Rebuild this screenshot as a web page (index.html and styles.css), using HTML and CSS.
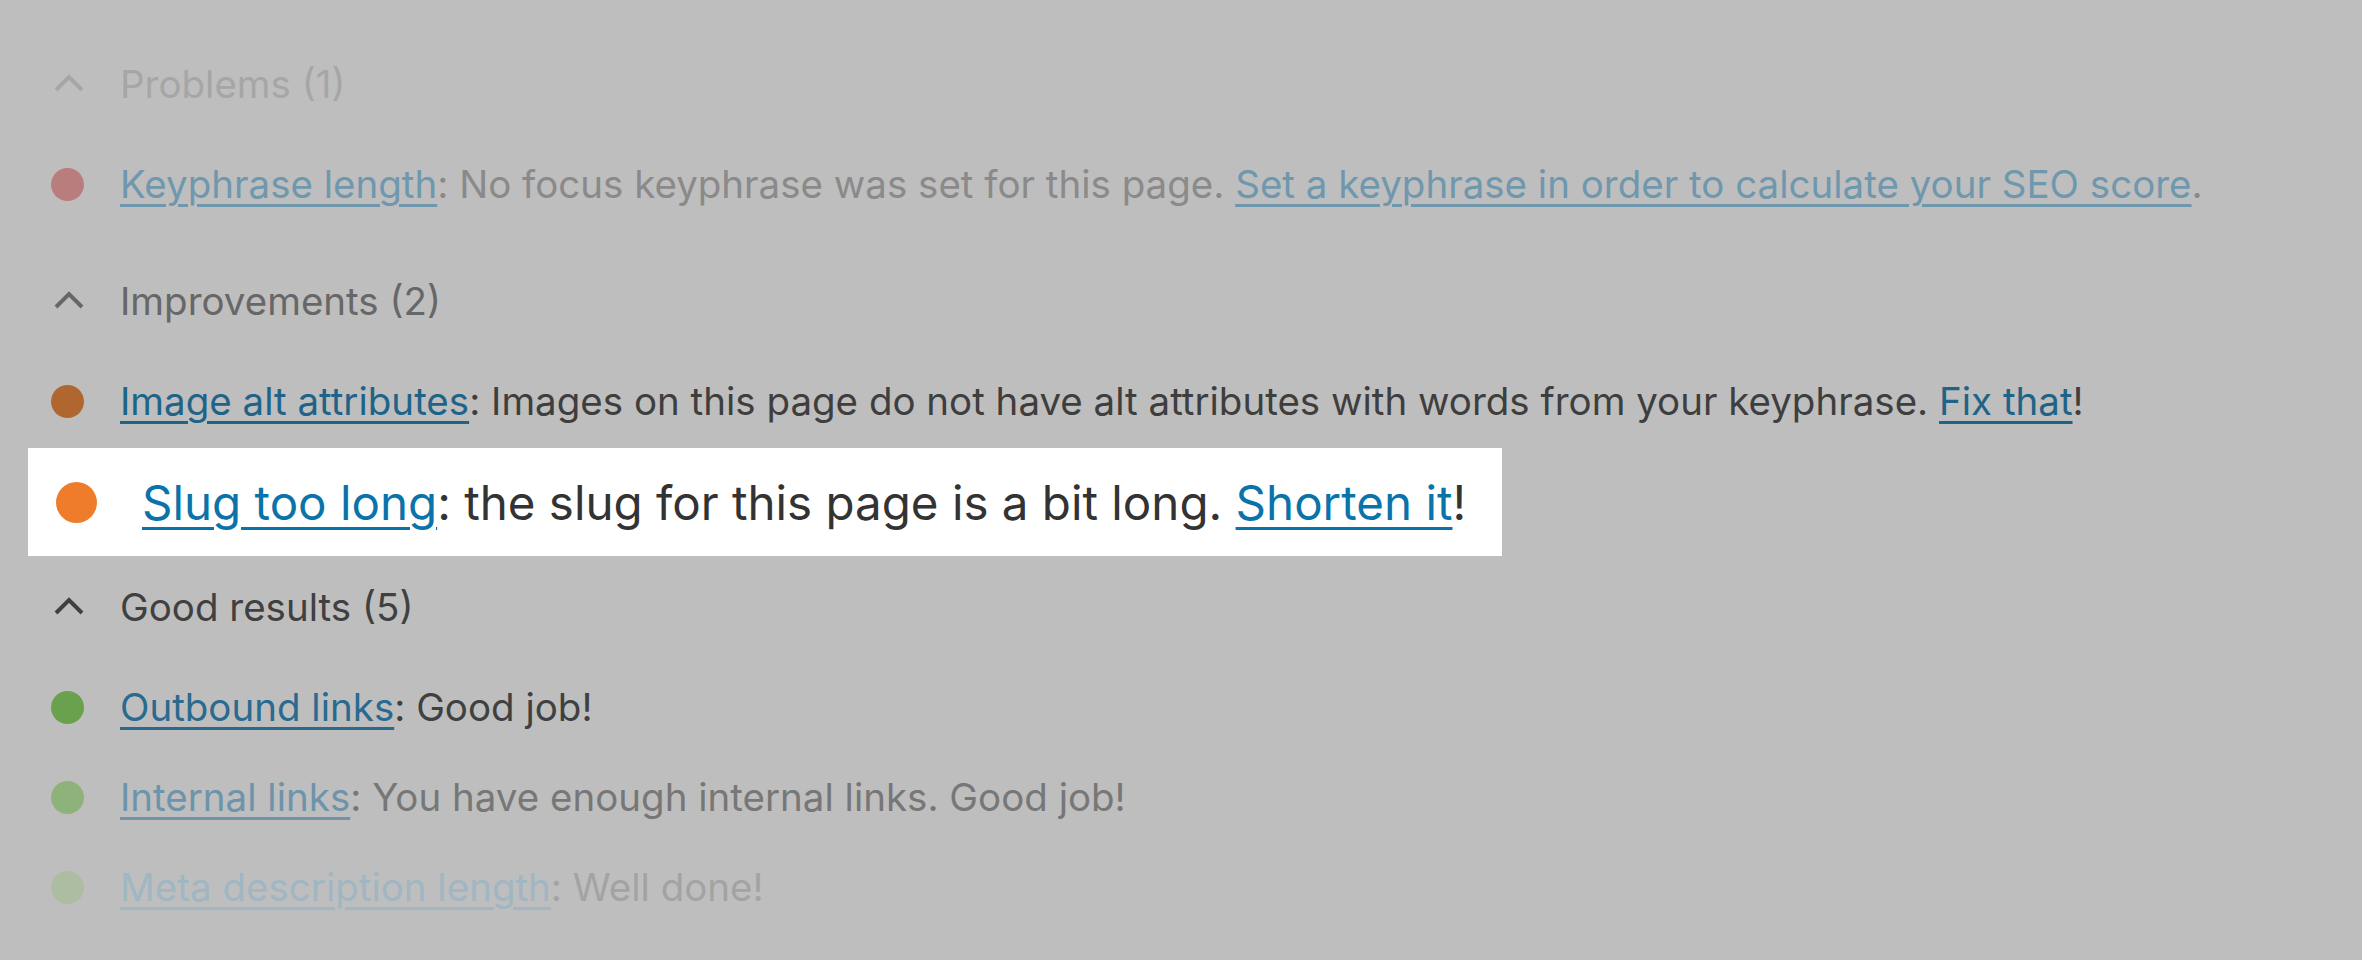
FILE: index.html
```html
<!DOCTYPE html>
<html lang="en">
<head>
<meta charset="utf-8">
<title>SEO analysis</title>
<link rel="stylesheet" href="styles.css">
</head>
<body>
<main class="results">
  <section class="group">
    <h2 class="group-head fade-3">
      <svg class="chev" viewBox="0 0 30 18"><polyline points="2,16 15,3 28,16"/></svg>
      <span>Problems (1)</span>
    </h2>
    <ul class="items">
      <li class="item fade-2 red"><span class="dot"></span><p><a href="#">Keyphrase length</a>: No focus keyphrase was set for this page. <a href="#">Set a keyphrase in order to calculate your SEO score</a>.</p></li>
    </ul>
  </section>

  <section class="group">
    <h2 class="group-head fade-1">
      <svg class="chev" viewBox="0 0 30 18"><polyline points="2,16 15,3 28,16"/></svg>
      <span>Improvements (2)</span>
    </h2>
    <ul class="items">
      <li class="item brown"><span class="dot"></span><p><a href="#">Image alt attributes</a>: Images on this page do not have alt attributes with words from your keyphrase. <a href="#">Fix that</a>!</p></li>
      <li class="item highlight"><span class="dot"></span><p><a href="#">Slug too long</a>: the slug for this page is a bit long. <a href="#">Shorten it</a>!</p></li>
    </ul>
  </section>

  <section class="group tight">
    <h2 class="group-head">
      <svg class="chev" viewBox="0 0 30 18"><polyline points="2,16 15,3 28,16"/></svg>
      <span>Good results (5)</span>
    </h2>
    <ul class="items">
      <li class="item green"><span class="dot"></span><p><a href="#">Outbound links</a>: Good job!</p></li>
      <li class="item green-2"><span class="dot"></span><p><a href="#">Internal links</a>: You have enough internal links. Good job!</p></li>
      <li class="item green-3"><span class="dot"></span><p><a href="#">Meta description length</a>: Well done!</p></li>
    </ul>
  </section>
</main>
</body>
</html>
```
FILE: styles.css
```css
* { box-sizing: border-box; }

html, body {
  margin: 0;
  padding: 0;
  background: #bebebe;
}

body {
  font-family: Inter, "Noto Sans", "Liberation Sans", sans-serif;
  font-size: 38.5px;
  color: #3e3e3e;
  --text: #3e3e3e;
  --link: #1f6488;
  --dot: #b0672f;
  --head: #404040;
}

.results {
  padding: 39px 0 0 0;
  display: flex;
  flex-direction: column;
}

.group + .group { margin-top: 27px; }
.group.tight { margin-top: 6px; }

.group-head {
  margin: 0 0 10px 0;
  height: 90px;
  display: flex;
  align-items: center;
  gap: 36px;
  padding-left: 54px;
  font-size: 38.5px;
  font-weight: 400;
  color: var(--head);
}

.chev {
  width: 30px;
  height: 18px;
  flex: none;
  margin-top: -2px;
}
.chev polyline {
  fill: none;
  stroke: var(--head);
  stroke-width: 4;
  stroke-linecap: butt;
  stroke-linejoin: miter;
}

.items {
  list-style: none;
  margin: 0;
  padding: 0;
}

.item {
  height: 90px;
  display: flex;
  align-items: center;
  gap: 36px;
  padding-left: 51px;
  color: var(--text);
}

.item p { margin: 0; white-space: nowrap; }

.item a {
  color: var(--link);
  text-decoration: underline;
  text-decoration-thickness: 2.5px;
  text-underline-offset: 6px;
}

.dot {
  width: 33px;
  height: 33px;
  border-radius: 50%;
  background: var(--dot);
  flex: none;
}

/* row tones (dimmed page) */
.fade-3 { --head: #a6a6a6; }
.fade-1 { --head: #676767; }

.red   { --dot: #ba7d7d; --link: #6f98ae; --text: #8a8a8a; }
.brown { --dot: #b0672f; --link: #1f6488; --text: #3e3e3e; }
.green { --dot: #6aa14d; --link: #2a6a8f; --text: #404040; }
.green-2 { --dot: #8db37a; --link: #6d94aa; --text: #777777; }
.green-3 { --dot: #acbda1; --link: #a0b6c3; --text: #a3a3a3; }

/* highlighted row */
.highlight {
  margin: 2px 0 0 28px;
  width: 1474px;
  height: 108px;
  padding-left: 28px;
  gap: 45px;
  background: #ffffff;
  font-size: 47.5px;
  --dot: #ee7c2b;
  --link: #0a73aa;
  --text: #333333;
}
.highlight .dot {
  width: 41px;
  height: 41px;
}
.highlight a { text-underline-offset: 7px; text-decoration-thickness: 3px; }
```
